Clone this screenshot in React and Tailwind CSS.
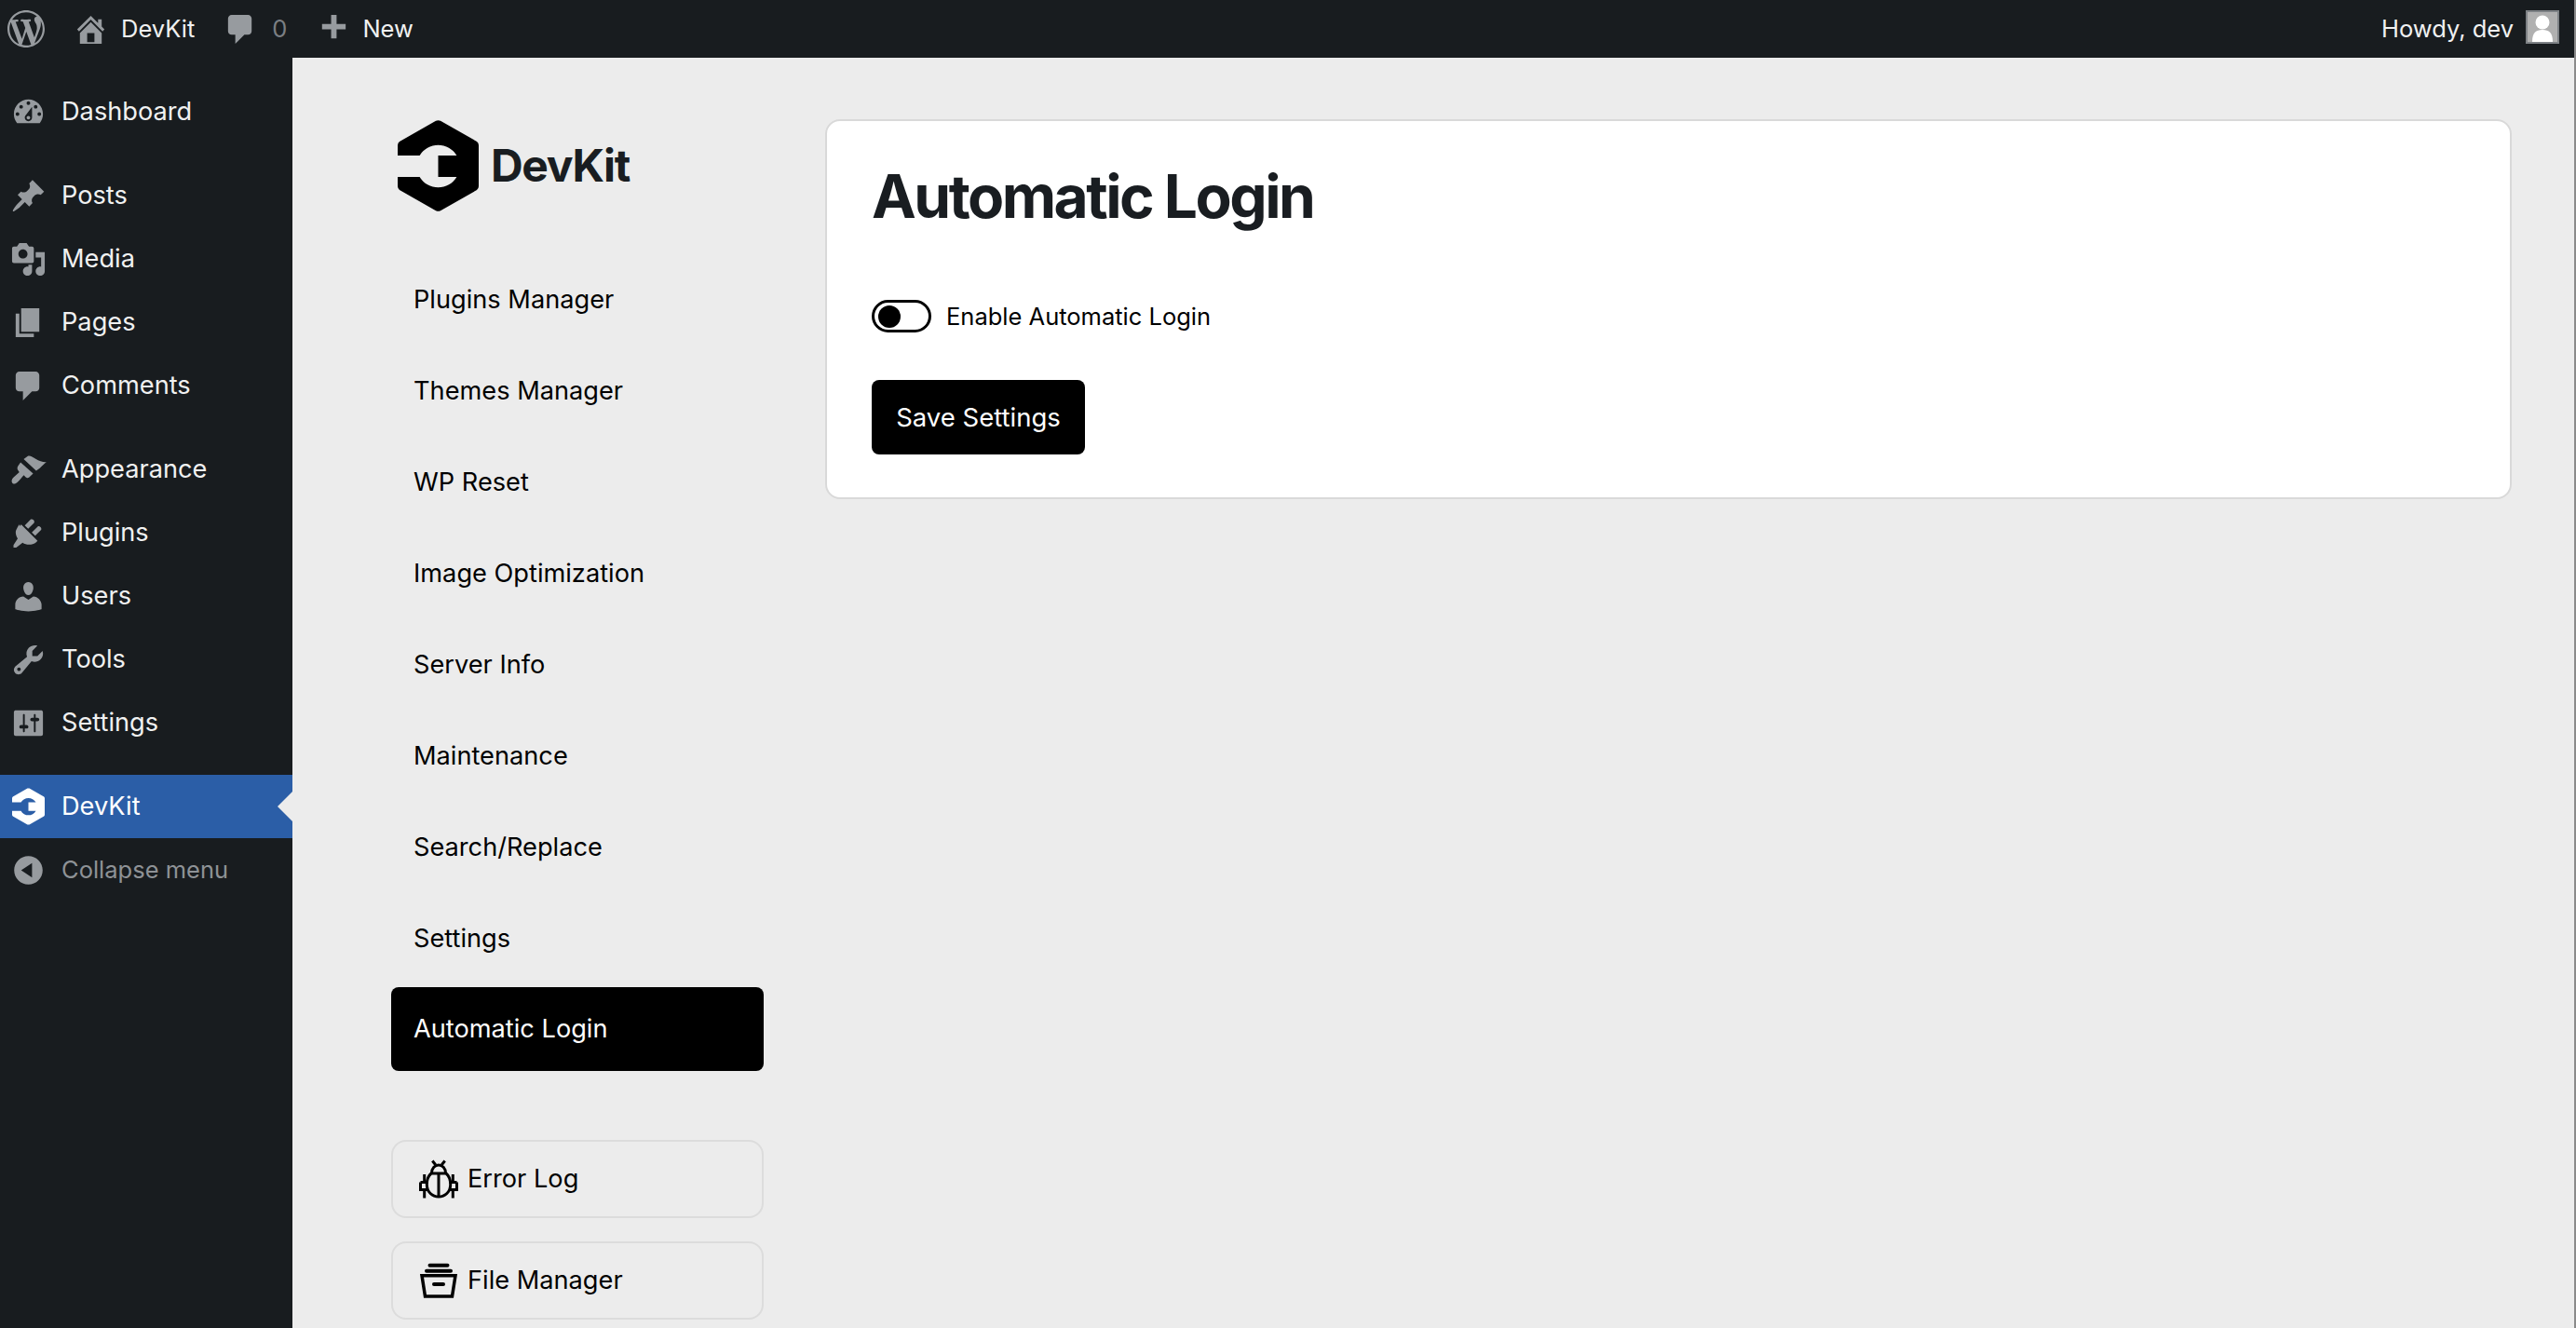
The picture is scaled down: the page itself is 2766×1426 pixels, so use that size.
const WP = "M20 10c0-5.51-4.49-10-10-10C4.48 0 0 4.49 0 10c0 5.52 4.48 10 10 10 5.51 0 10-4.48 10-10zM7.78 15.37L4.37 6.22c.55-.02 1.17-.08 1.17-.08.5-.06.44-1.13-.06-1.11 0 0-1.45.11-2.37.11-.18 0-.37 0-.58-.01C4.12 2.69 6.87 1.11 10 1.11c2.33 0 4.45.87 6.05 2.34-.68-.11-1.65.39-1.65 1.58 0 .74.45 1.36.9 2.1.35.61.55 1.36.55 2.46 0 1.49-1.4 5-1.4 5l-3.03-8.37c.54-.02.82-.17.82-.17.5-.05.44-1.25-.06-1.22 0 0-1.44.12-2.38.12-.87 0-2.33-.12-2.33-.12-.5-.03-.56 1.2-.06 1.22l.92.08 1.26 3.41zM17.41 10c.24-.64.74-1.87.43-4.25.7 1.29 1.05 2.71 1.05 4.25 0 3.29-1.73 6.24-4.4 7.78.97-2.59 1.94-5.2 2.92-7.78zM6.1 18.09C3.12 16.65 1.11 13.53 1.11 10c0-1.3.23-2.48.72-3.59C3.25 10.3 4.67 14.2 6.1 18.09zm4.03-6.63l2.58 6.98c-.86.29-1.76.45-2.71.45-.79 0-1.57-.11-2.29-.33.81-2.38 1.62-4.74 2.42-7.1z";
const HOME = "M16 8.5l1.53 1.53-1.06 1.06L10 4.62l-6.47 6.47-1.06-1.06L10 2.5l4 4v-2h2v4zm-6-2.46l6 5.99V18H4v-5.97zM12 17v-5H8v5h4z";
const COMMENT = "M5 2h9c1.1 0 2 .9 2 2v7c0 1.1-.9 2-2 2h-2l-5 5v-5H5c-1.1 0-2-.9-2-2V4c0-1.1.9-2 2-2z";
const PLUS = "M17 7v3h-5v5H9v-5H4V7h5V2h3v5h5z";
const DASH = "M3.76 16h12.48c1.1-1.37 1.76-3.11 1.76-5 0-4.42-3.58-8-8-8s-8 3.58-8 8c0 1.89.66 3.63 1.76 5zM10 4c.55 0 1 .45 1 1s-.45 1-1 1-1-.45-1-1 .45-1 1-1zM6 6c.55 0 1 .45 1 1s-.45 1-1 1-1-.45-1-1 .45-1 1-1zm8 0c.55 0 1 .45 1 1s-.45 1-1 1-1-.45-1-1 .45-1 1-1zm-5.37 5.55L12 7v6c0 1.1-.9 2-2 2s-2-.9-2-2c0-.57.24-1.08.63-1.45zM4 10c.55 0 1 .45 1 1s-.45 1-1 1-1-.45-1-1 .45-1 1-1zm12 0c.55 0 1 .45 1 1s-.45 1-1 1-1-.45-1-1 .45-1 1-1zm-5 3c0-.55-.45-1-1-1s-1 .45-1 1 .45 1 1 1 1-.45 1-1z";
const PIN = "M10.44 3.02l1.82-1.82 6.36 6.35-1.83 1.82c-1.05-.68-2.48-.57-3.41.36l-.75.75c-.92.93-1.04 2.35-.35 3.41l-1.83 1.82-2.41-2.41-2.8 2.79c-.42.42-3.38 2.71-3.8 2.29s1.86-3.39 2.28-3.81l2.79-2.79L4.1 9.36l1.83-1.82c1.05.69 2.48.57 3.4-.36l.75-.75c.93-.92 1.05-2.35.36-3.41z";
const MEDIA = "M13 11V4c0-.55-.45-1-1-1h-1.67L9 1H5L3.67 3H2c-.55 0-1 .45-1 1v7c0 .55.45 1 1 1h10c.55 0 1-.45 1-1zM7 4.5c1.38 0 2.5 1.12 2.5 2.5S8.38 9.5 7 9.5 4.5 8.38 4.5 7 5.62 4.5 7 4.5zM14 6h5v10.5c0 1.38-1.12 2.5-2.5 2.5S14 17.88 14 16.5s1.12-2.5 2.5-2.5c.17 0 .34.02.5.05V9h-3V6zm-4 8.05V13h2v3.5c0 1.38-1.12 2.5-2.5 2.5S7 17.88 7 16.5 8.12 14 9.5 14c.17 0 .34.02.5.05z";
const PAGE = "M6 15V2h10v13H6zm-1 1h8v2H3V5h2v11z";
const BRUSH = "M7.4 4.1L9.5 2.5C11 2 12 2.8 14 4C16 5.3 18 5.8 19.9 5.7L17 8.3C16.5 9 15.5 9.5 14.3 10.5ZM5.7 5.9L12.6 12L10.3 14.2C9.5 14.7 8.8 14.3 8.3 13.8L7.5 13C6.5 14 5.5 15.5 4 16.8C2.8 18 1.5 18 1 17C.5 16 1 14.9 2 14L5 11.3L4.3 10.3C3.7 9.5 3.8 8.5 4.5 7.5Z";
const PLUG = "M13.11 4.36L9.87 7.6 8 5.73l3.24-3.24c.35-.34 1.05-.25 1.54.25.5.49.59 1.19.33 1.62zM16.98 8.23l-3.24 3.24-1.87-1.87 3.24-3.24c.35-.34 1.05-.25 1.54.25.5.49.59 1.19.33 1.62zM5.12 6.13l.91-.91 9.01 9.01-.91.91c-.71.71-2.58 1.18-3.82 1.18-1.24 0-2.54-.4-3.5-1.12L3.3 18H1.8v-1.5l2.32-3.5c-.72-.96-1.12-2.27-1.12-3.5 0-1.24 1.41-3.66 2.12-4.37z";
const USER = "M10 9.25c-2.27 0-2.73-3.44-2.73-3.44C7 4.02 7.82 2 9.97 2c2.16 0 2.98 2.02 2.71 3.81 0 0-.41 3.44-2.68 3.44zm0 2.57L12.72 10c2.39 0 4.52 2.33 4.52 4.53v2.49s-3.65 1.13-7.24 1.13c-3.65 0-7.24-1.13-7.24-1.13v-2.49c0-2.25 1.94-4.48 4.47-4.48z";
const TOOL = "M16.68 9.77c-1.34 1.34-3.3 1.67-4.95.99l-5.41 6.52c-.99.99-2.59.99-3.58 0s-.99-2.59 0-3.58l6.52-5.42c-.68-1.65-.35-3.61.99-4.95 1.28-1.28 3.12-1.64 4.72-1.09l-2.83 2.83.01 2.83h2.83l2.81-2.82c.55 1.6.19 3.42-1.09 4.7zM4.1 15.9c.39.39 1.02.39 1.41 0 .39-.39.39-1.02 0-1.41-.39-.39-1.02-.39-1.41 0-.39.39-.39 1.02 0 1.41z";
const SETTINGS = "M18 16V4c0-.55-.45-1-1-1H3c-.55 0-1 .45-1 1v12c0 .55.45 1 1 1h14c.55 0 1-.45 1-1zM8 11h1c.55 0 1 .45 1 1s-.45 1-1 1H8v1.5c0 .28-.22.5-.5.5s-.5-.22-.5-.5V13H6c-.55 0-1-.45-1-1s.45-1 1-1h1V5.5c0-.28.22-.5.5-.5s.5.22.5.5V11zm5-2h-1c-.55 0-1-.45-1-1s.45-1 1-1h1V5.5c0-.28.22-.5.5-.5s.5.22.5.5V7h1c.55 0 1 .45 1 1s-.45 1-1 1h-1v5.5c0 .28-.22.5-.5.5s-.5-.22-.5-.5V9z";
const COLLAPSE = "M10 2.16c4.33 0 7.84 3.51 7.84 7.84s-3.51 7.84-7.84 7.84S2.16 14.33 2.16 10 5.67 2.16 10 2.16zM12 14V6l-6 4z";
const LOGO = "M41 .8Q43.5-.3 46 .8L85 23Q87 24.5 87 27V71Q87 73.5 85 75L46 97.2Q43.5 98.3 41 97.2L2 75Q0 73.5 0 71V61H23.6A23.2 23.2 0 0 0 63.4 61H43.5V38H63.4A23.2 23.2 0 0 0 23.6 38H0V27Q0 24.5 2 23Z";

function Dash({ d, className = "" }) {
  return (
    <svg viewBox="0 0 20 20" className={className} fill="currentColor" fillRule="evenodd" aria-hidden="true">
      <path d={d} />
    </svg>
  );
}

function Logo({ className }) {
  return (
    <svg viewBox="0 0 87 98" className={className} fill="currentColor" aria-hidden="true">
      <path d={LOGO} />
    </svg>
  );
}

function BugIcon() {
  return (
    <svg viewBox="0 0 42 42" className="w-[42px] h-[42px]" fill="none" stroke="currentColor" strokeWidth="3" aria-hidden="true">
      <path d="M14.3 1.5l3.4 4.2M27.7 1.5l-3.4 4.2" />
      <path d="M13.5 15c0-12 15-12 15 0" />
      <path d="M13 15h16c3 2.5 4.7 6.5 4.7 12 0 8-6 13-12.7 13s-12.7-5-12.7-13c0-5.5 1.7-9.5 4.7-12z" />
      <path d="M21 15v25" />
      <path d="M5.7 16v8.5M1.5 24.5H9.5M1.5 24.5v8H9.5M5.7 32.5V41.5M36.3 16v8.5M40.5 24.5H32.5M40.5 24.5v8H32.5M36.3 32.5V41.5" />
    </svg>
  );
}

function ArchiveIcon() {
  return (
    <svg viewBox="0 0 42 42" className="w-[42px] h-[42px]" fill="none" stroke="currentColor" strokeWidth="3.5" aria-hidden="true">
      <path d="M11.5 4.7h19M8 10.7h26" strokeWidth="4" strokeLinecap="round" />
      <path d="M3 15.7h36l-3.5 22.3H6.5z" />
      <path d="M16 25h10" strokeWidth="4" strokeLinecap="round" />
    </svg>
  );
}

function MenuRow({ icon, label, dim = false, active = false }) {
  return (
    <div className={"relative flex items-center h-[68px] " + (active ? "bg-[#2b5ea7] text-white" : dim ? "text-[#8e9296] text-[25.5px]" : "text-[#f0f1f1]")}>
      <div className={"w-[66px] flex justify-center pr-[6px] shrink-0 " + (active ? "text-white" : "text-[#979b9f]")}>{icon}</div>
      <span>{label}</span>
      {active && (
        <span className="absolute right-0 top-[18px] w-0 h-0 border-y-[16px] border-y-transparent border-r-[16px] border-r-[#ececec]" />
      )}
    </div>
  );
}

const navItems = ["Plugins Manager", "Themes Manager", "WP Reset", "Image Optimization", "Server Info", "Maintenance", "Search/Replace", "Settings"];

export default function App() {
  return (
    <div className="h-[1426px] w-full overflow-hidden flex flex-col bg-[#ececec] border-r-2 border-r-[#8a8a8a] text-[27.2px] leading-[34px] text-black [font-family:Inter,'Liberation_Sans',sans-serif]">
      {/* Admin bar */}
      <header className="h-[62px] shrink-0 bg-[#181c1f] flex items-center justify-between text-[#f0f1f1] text-[25.5px]">
        <div className="flex items-center">
          <Dash d={WP} className="w-[40px] h-[40px] ml-[8px] text-[#979b9f]" />
          <Dash d={HOME} className="w-[39px] h-[39px] ml-[30px] text-[#979b9f]" />
          <span className="ml-[13px]">DevKit</span>
          <Dash d={COMMENT} className="w-[39px] h-[39px] ml-[30px] text-[#979b9f]" />
          <span className="ml-[14px] text-[#7b7f83]">0</span>
          <Dash d={PLUS} className="w-[39px] h-[39px] ml-[30px] text-[#979b9f]" />
          <span className="ml-[12px]">New</span>
        </div>
        <div className="flex items-center mr-[16px]">
          <span>Howdy, dev</span>
          <div className="ml-[13px] mb-[4px] w-[36px] h-[36px] border-2 border-[#7e8286] bg-[#b0b0b0] overflow-hidden flex justify-center items-end">
            <svg viewBox="0 0 32 32" className="w-[32px] h-[32px] text-white" fill="currentColor" aria-hidden="true">
              <circle cx="16" cy="11" r="7.5" />
              <path d="M5 32c0-10 4-13 11-13s11 3 11 13z" />
            </svg>
          </div>
        </div>
      </header>

      <div className="flex flex-1 min-h-0">
        {/* WP sidebar */}
        <aside className="w-[314px] shrink-0 bg-[#181c1f] pt-[24px]">
          <MenuRow icon={<Dash d={DASH} className="w-[39px] h-[39px]" />} label="Dashboard" />
          <div className="h-[22px]" />
          <MenuRow icon={<Dash d={PIN} className="w-[39px] h-[39px]" />} label="Posts" />
          <MenuRow icon={<Dash d={MEDIA} className="w-[39px] h-[39px]" />} label="Media" />
          <MenuRow icon={<Dash d={PAGE} className="w-[39px] h-[39px]" />} label="Pages" />
          <MenuRow icon={<Dash d={COMMENT} className="w-[39px] h-[39px]" />} label="Comments" />
          <div className="h-[22px]" />
          <MenuRow icon={<Dash d={BRUSH} className="w-[39px] h-[39px]" />} label="Appearance" />
          <MenuRow icon={<Dash d={PLUG} className="w-[39px] h-[39px]" />} label="Plugins" />
          <MenuRow icon={<Dash d={USER} className="w-[39px] h-[39px]" />} label="Users" />
          <MenuRow icon={<Dash d={TOOL} className="w-[39px] h-[39px]" />} label="Tools" />
          <MenuRow icon={<Dash d={SETTINGS} className="w-[39px] h-[39px]" />} label="Settings" />
          <div className="h-[22px]" />
          <MenuRow active icon={<Logo className="w-[35px] h-[40px]" />} label="DevKit" />
          <MenuRow dim icon={<Dash d={COLLAPSE} className="w-[39px] h-[39px]" />} label="Collapse menu" />
        </aside>

        {/* Plugin nav */}
        <nav className="w-[400px] shrink-0 ml-[106px] pt-[67px]">
          <div className="flex items-center pl-[7px] h-[98px]">
            <Logo className="w-[87px] h-[98px] text-black" />
            <span className="ml-[13px] text-[48px] leading-none font-bold text-[#191d21] tracking-[-1.3px]">DevKit</span>
          </div>
          <div className="mt-[49px] flex flex-col gap-[8px]">
            {navItems.map((t) => (
              <div key={t} className="h-[90px] flex items-center px-[24px] pt-[2px]">{t}</div>
            ))}
            <div className="h-[90px] flex items-center px-[24px] bg-black text-white rounded-lg">Automatic Login</div>
          </div>
          <div className="mt-[74px] flex flex-col gap-[25px]">
            <div className="h-[84px] flex items-center pl-[28px] gap-[10px] border-2 border-[#dcdcdc] rounded-2xl">
              <BugIcon />
              <span>Error Log</span>
            </div>
            <div className="h-[84px] flex items-center pl-[28px] gap-[10px] border-2 border-[#dcdcdc] rounded-2xl">
              <ArchiveIcon />
              <span>File Manager</span>
            </div>
          </div>
        </nav>

        {/* Main */}
        <main className="flex-1 min-w-0 pl-[66px] pr-[67px] pt-[66px]">
          <section className="h-[408px] bg-white border-2 border-[#d9d9d9] rounded-2xl pl-[48px] pt-[43px]">
            <h1 className="text-[64px] leading-[76px] font-bold text-[#191d21] tracking-[-2.5px]">Automatic Login</h1>
            <div className="mt-[73px] flex items-center gap-[16px] h-[35px]">
              <div className="w-[64px] h-[35px] rounded-full border-[3px] border-black bg-white flex items-center pl-[4px]">
                <div className="w-[24px] h-[24px] rounded-full bg-black" />
              </div>
              <span className="text-[25.5px]">Enable Automatic Login</span>
            </div>
            <button className="mt-[51px] w-[229px] h-[80px] rounded-lg bg-black text-white text-[27.5px]">Save Settings</button>
          </section>
        </main>
      </div>
    </div>
  );
}
